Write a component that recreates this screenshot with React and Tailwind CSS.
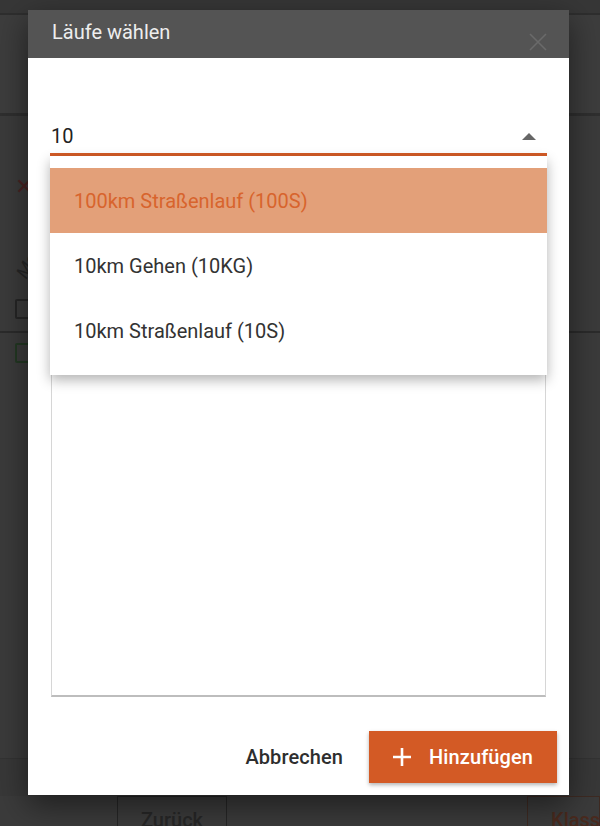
import React from "react";

export default function App() {
  return (
    <div className="relative w-[600px] h-[826px] overflow-hidden bg-[#3b3b3b] font-['Roboto',sans-serif]">
      {/* background page (dimmed) */}
      <div className="flex flex-col w-full h-full">
        <div className="h-[15px] bg-[#373737] border-b-2 border-[#2e2e2e]" />
        <div className="h-[101px] bg-[#3d3d3d] border-b-[3px] border-[#2f2f2f]" />
        <div className="flex flex-col pl-[15px] pt-[60px]">
          <span className="text-[22px] leading-none text-[#4a2323] font-light">✕</span>
          <span className="mt-[52px] ml-[-2px] w-[30px] -rotate-[60deg] italic text-[18px] text-[#262626]">Max</span>
          <div className="mt-[22px] w-[18px] h-[20px] border-2 border-[#262626] rounded-[2px]" />
        </div>
        <div className="mt-[12px] h-[2px] bg-[#2b2b2b]" />
        <div className="pl-[15px] pt-[10px]">
          <div className="w-[18px] h-[20px] border-2 border-[#233823] rounded-[2px]" />
        </div>
        <div className="flex-1" />
        <div className="h-[38px] border-t border-[#333] bg-[#383838]" />
        <div className="flex h-[30px]">
          <div className="ml-[117px] w-[110px] h-[40px] border border-[#262626] flex justify-center pt-[8px] text-[20px] font-medium text-[#272727]">
            Zurück
          </div>
          <div className="ml-auto w-[73px] h-[40px] border border-[#3e2a22] pl-[23px] pt-[8px] text-[20px] font-medium text-[#4a2a1e]">
            Klass
          </div>
        </div>
      </div>

      {/* modal dialog */}
      <div className="absolute left-[28px] top-[10px] w-[541px] h-[785px] bg-white shadow-[0_10px_30px_rgba(0,0,0,0.5)] flex flex-col">
        <div className="relative h-[48px] shrink-0 bg-[#545454] px-[24px] pt-[8px] text-[20px] leading-[28px] text-[#eeeeee]">
          Läufe wählen
          <svg className="absolute left-[501px] top-[23px]" width="18" height="18" viewBox="0 0 18 18">
            <path d="M1 1 L17 17 M17 1 L1 17" stroke="#6a6a6a" strokeWidth="1.6" fill="none" />
          </svg>
        </div>

        <div className="relative flex flex-col flex-1 px-[22px] pt-[61px]">
          {/* select */}
          <div className="h-[37px] flex items-center justify-between border-b-[3px] border-[#d35b26] pl-[1px] pr-[11px]">
            <span className="text-[20px] leading-[24px] text-[#222]">10</span>
            <span className="w-0 h-0 border-l-[7px] border-r-[7px] border-b-[7px] border-l-transparent border-r-transparent border-b-[#666]" />
          </div>

          {/* list box */}
          <div className="mt-[14px] mx-[1px] h-[527px] border border-[#d6d6d6] border-b-[2px] border-b-[#bdbdbd] bg-white" />

          {/* dropdown */}
          <div className="absolute left-[22px] top-[98px] w-[497px] bg-white py-[12px] shadow-[0_5px_12px_rgba(0,0,0,0.3)]">
            <div className="h-[65px] flex items-center px-[24px] bg-[#e3a079] text-[20px] text-[#d8642d]">
              100km Straßenlauf (100S)
            </div>
            <div className="h-[65px] flex items-center px-[24px] text-[20px] text-[#333]">
              10km Gehen (10KG)
            </div>
            <div className="h-[65px] flex items-center px-[24px] text-[20px] text-[#333]">
              10km Straßenlauf (10S)
            </div>
          </div>

          {/* footer */}
          <div className="mt-auto mb-[12px] mr-[-10px] flex items-center justify-end gap-[10px]">
            <button className="h-[52px] px-[16px] text-[20px] font-medium tracking-[0.1px] text-[#2e2e2e]">
              Abbrechen
            </button>
            <button className="h-[52px] pl-[24px] pr-[24px] flex items-center gap-[18px] bg-[#d35a25] text-white text-[20px] font-medium tracking-[0.1px] shadow-[0_2px_4px_rgba(0,0,0,0.3)]">
              <svg width="18" height="18" viewBox="0 0 18 18">
                <path d="M9 0 V18 M0 9 H18" stroke="white" strokeWidth="2.6" fill="none" />
              </svg>
              Hinzufügen
            </button>
          </div>
        </div>
      </div>
    </div>
  );
}
